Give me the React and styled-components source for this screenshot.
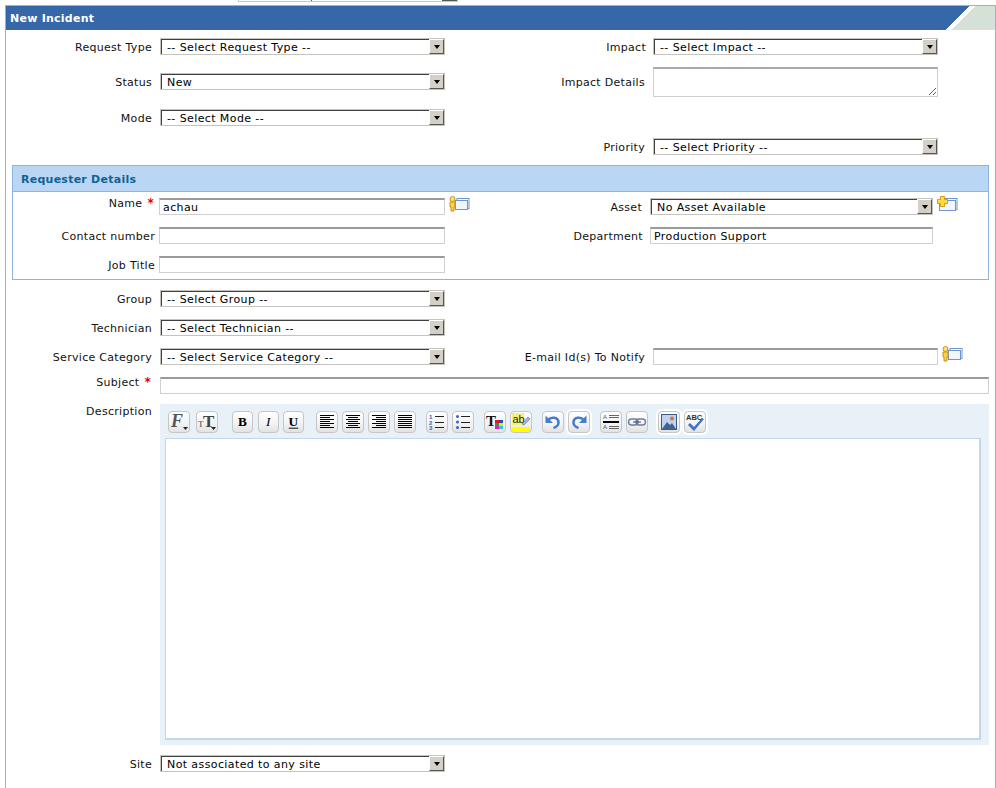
import React from 'react';
import styled, {createGlobalStyle} from 'styled-components';

const GlobalStyle = createGlobalStyle`
    html, body {
        margin: 0;
        padding: 0;
        background: #fff;
    }
    body {
        font-family: "DejaVu Sans", Verdana, sans-serif;
        font-size: 11px;
        letter-spacing: .4px;
        color: #111;
        height: 788px;
        overflow: hidden;
    }
`

const TopStrip = styled('div')`
    height: 5px;
    padding-left: 238px;
`

const TopSelect = styled('div')`
    box-sizing: border-box;
    width: 220px;
    height: 2px;
    padding-left: 72px;
    display: flex;
    justify-content: space-between;
    background: #fff;
    border: 1px solid #c8c8c4;
    border-top: none;
`

const TopTick = styled('div')`
    width: 1px;
    height: 1px;
    background: #555;
`

const TopArrow = styled('div')`
    width: 15px;
    height: 1px;
    background: #55534e;
`

const Panel = styled('div')`
    margin-left: 5px;
    width: 989px;
    height: 783px;
    border: 1px solid #8fb4e2;
    border-bottom: none;
    overflow: hidden;
`

const PanelHeader = styled('div')`
    height: 24px;
    display: flex;
    align-items: center;
    justify-content: space-between;
    background: #3567a9;
`

const PanelTitle = styled('div')`
    padding: 1px 0 0 4px;
    color: #fff;
    font-size: 11px;
    font-weight: bold;
    letter-spacing: .25px;
`

const FormRow = styled('div')`
    display: grid;
    grid-template-columns: 154px 285px 208px 285px;
    align-items: ${p => p.$align || 'center'};
    margin-top: ${p => p.$top ?? 12}px;
`

const FieldLabel = styled('div')`
    box-sizing: border-box;
    text-align: right;
    line-height: 15px;
    letter-spacing: .3px;
    padding-top: 2px;
    padding-right: ${p => p.$pad ?? 8}px;
    margin-top: ${p => p.$up ? -p.$up : 0}px;
    white-space: nowrap;
`

const Star = styled('span')`
    color: #e00000;
    font-size: 12px;
    font-weight: bold;
    margin-left: 5px;
`

const SelectBox = styled('div')`
    box-sizing: border-box;
    height: 17px;
    width: ${p => p.$w || 285}px;
    margin-top: ${p => p.$mt || 0}px;
    flex-shrink: 0;
    display: flex;
    align-items: stretch;
    background: #fff;
    border: 1px solid #c4c3be;
    box-shadow: inset 1px 1px 0 #404040;
`

const SelectText = styled('div')`
    flex: 1;
    padding: 1px 0 0 6px;
    line-height: 15px;
    color: #000;
    white-space: nowrap;
`

const SelectArrow = styled('div')`
    box-sizing: border-box;
    width: 15px;
    display: flex;
    align-items: center;
    justify-content: center;
    background: #d4d0c8;
    border: 1px solid;
    border-color: #fff #555 #555 #fff;
    &::after {
        content: '';
        border-style: solid;
        border-width: 4px 3px 0 3px;
        border-color: #000 transparent transparent transparent;
    }
`

const TextInput = styled('input')`
    box-sizing: border-box;
    display: block;
    height: 17px;
    width: ${p => p.$w || 285}px;
    flex-shrink: 0;
    margin: 0;
    padding: 0 3px;
    background: #fff;
    border: 1px solid #d0d0d0;
    border-top: 2px solid #9a9a9a;
    border-radius: 0;
    outline: none;
    font: 11px "DejaVu Sans", Verdana, sans-serif;
    letter-spacing: .4px;
    color: #000;
`

const TextArea = styled('textarea')`
    box-sizing: border-box;
    display: block;
    height: 30px;
    width: 285px;
    margin: 0;
    padding: 2px;
    background: #fff;
    border: 1px solid #d0d0d0;
    border-top: 2px solid #a8a8a8;
    border-radius: 0;
    outline: none;
`

const ControlCell = styled('div')`
    display: flex;
    align-items: flex-start;
`

const SideIcon = styled('svg')`
    flex-shrink: 0;
    margin: -2px 0 0 4px;
`

const RequesterBox = styled('div')`
    box-sizing: border-box;
    width: 977px;
    height: 115px;
    margin: 10px 0 0 6px;
    border: 1px solid #8fb4e2;
`

const BoxHeader = styled('div')`
    height: 25px;
    padding-left: 8px;
    line-height: 27px;
    background: #bad6f5;
    border-bottom: 1px solid #8fb4e2;
    color: #0f6394;
    font-size: 11px;
    font-weight: bold;
    letter-spacing: .25px;
`

const BoxRow = styled('div')`
    display: grid;
    grid-template-columns: 146px 286px 205px 283px;
    align-items: ${p => p.$align || 'center'};
    margin-top: ${p => p.$top ?? 12}px;
`

const WideRow = styled('div')`
    display: flex;
    align-items: flex-start;
    margin-top: ${p => p.$top ?? 12}px;
`

const WideLabel = styled(FieldLabel)`
    width: 154px;
    flex-shrink: 0;
`

const EditorPanel = styled('div')`
    box-sizing: border-box;
    width: 829px;
    height: 341px;
    padding: 7px 8px 5px 5px;
    display: flex;
    flex-direction: column;
    background: #e9f1f8;
`

const Toolbar = styled('div')`
    display: flex;
    gap: 4px;
    padding-left: 3px;
    height: 22px;
`

const ToolButton = styled('div')`
    box-sizing: border-box;
    width: ${p => p.$w || 22}px;
    height: 22px;
    margin-left: ${p => p.$ml || 0}px;
    display: flex;
    align-items: center;
    justify-content: center;
    border: 1px solid #c6c6c6;
    border-radius: 4px;
    background: linear-gradient(#ffffff, #f2f2f2 60%, #e2e2e2);
    box-shadow: ${p => p.$halo ? '0 0 0 2px #fff' : 'none'};
`

const EditorArea = styled('div')`
    flex: 1;
    margin-top: 5px;
    background: #fff;
    border: 1px solid #c5d5ea;
    border-width: 1px 2px 2px 1px;
`

// dessins de la barre d'outils
const Svg = ({children}) => <svg width="20" height="20" viewBox="0 0 20 20">{children}</svg>

const Lines = ({rows, color = '#000'}) => rows.map(([x1, x2, y, h], i) => (
    <rect key={i} x={x1} y={y} width={x2 - x1} height={h || 1} fill={color}/>
))

const Caret = () => <path d="M14 15h5l-2.5 3z" fill="#222"/>

const IconFont = () => (
    <Svg>
        <text x="2" y="15" fontFamily="Liberation Serif" fontStyle="italic" fontWeight="bold" fontSize="18" fill="#555">F</text>
        <Caret/>
    </Svg>
)

const IconSize = () => (
    <Svg>
        <text x="1" y="15" fontFamily="Liberation Serif" fontSize="9" fill="#444">T</text>
        <text x="6" y="15" fontFamily="Liberation Serif" fontWeight="bold" fontSize="17" fill="#444">T</text>
        <Caret/>
    </Svg>
)

const IconLetter = ({children, italic, bold, underline}) => (
    <Svg>
        <text x="10" y="14.5" textAnchor="middle" fontFamily="Liberation Serif" fontSize="14"
              fontStyle={italic ? 'italic' : 'normal'} fontWeight={bold ? 'bold' : 'normal'} fill="#000">{children}</text>
        {underline && <rect x="5" y="16" width="10" height="1" fill="#000"/>}
    </Svg>
)

const align = {
    left: [[3, 17, 3], [3, 13, 5], [3, 17, 7], [3, 13, 9], [3, 17, 11], [3, 13, 13], [3, 17, 15]],
    center: [[3, 17, 3], [5, 15, 5], [3, 17, 7], [5, 15, 9], [3, 17, 11], [5, 15, 13], [3, 17, 15]],
    right: [[3, 17, 3], [7, 17, 5], [3, 17, 7], [7, 17, 9], [3, 17, 11], [7, 17, 13], [3, 17, 15]],
    full: [[3, 17, 3], [3, 17, 5], [3, 17, 7], [3, 17, 9], [3, 17, 11], [3, 17, 13], [3, 17, 15]],
}

const IconAlign = ({mode}) => <Svg><Lines rows={align[mode]}/></Svg>

const IconOrdered = () => (
    <Svg>
        <text x="2" y="7" fontFamily="Liberation Sans" fontWeight="bold" fontSize="6" fill="#3a62b8">1</text>
        <text x="2" y="12.5" fontFamily="Liberation Sans" fontWeight="bold" fontSize="6" fill="#3a62b8">2</text>
        <text x="2" y="18" fontFamily="Liberation Sans" fontWeight="bold" fontSize="6" fill="#3a62b8">3</text>
        <Lines rows={[[8, 17, 4], [8, 17, 10], [8, 17, 15]]} color="#222"/>
    </Svg>
)

const IconBullets = () => (
    <Svg>
        <circle cx="4.5" cy="4.5" r="1.5" fill="#3a62b8"/>
        <circle cx="4.5" cy="10" r="1.5" fill="#3a62b8"/>
        <circle cx="4.5" cy="15.5" r="1.5" fill="#3a62b8"/>
        <Lines rows={[[8, 17, 4], [8, 17, 10], [8, 17, 15]]} color="#222"/>
    </Svg>
)

const IconTextColor = () => (
    <Svg>
        <text x="1" y="14" fontFamily="Liberation Serif" fontWeight="bold" fontSize="15" fill="#111">T</text>
        <rect x="10" y="8" width="4" height="3" fill="#e01818"/>
        <rect x="14" y="8" width="4" height="3" fill="#2048d8"/>
        <rect x="10" y="11" width="4" height="3" fill="#20a038"/>
        <rect x="14" y="11" width="4" height="3" fill="#e8e020"/>
        <rect x="10" y="14" width="4" height="3" fill="#e020c0"/>
        <rect x="14" y="14" width="4" height="3" fill="#20c8e0"/>
    </Svg>
)

const IconHighlight = () => (
    <Svg>
        <rect x="1" y="1" width="12" height="12" fill="#f4f07a"/>
        <text x="1.5" y="11" fontFamily="Liberation Sans" fontSize="11" letterSpacing="0" fill="#222">ab</text>
        <path d="M11 12l6-7 2 2-6 6z" fill="#aab8d8" stroke="#5a6a90" strokeWidth=".6"/>
        <rect x="1" y="15" width="18" height="4" fill="#ffff00"/>
    </Svg>
)

const IconUndo = ({flip}) => (
    <Svg>
        <g transform={flip ? 'translate(20 0) scale(-1 1)' : undefined}>
            <path d="M5 8c3-3.5 10-3 10.500 2 .3 3-2 5-5 6" fill="none" stroke="#4a7cc8" strokeWidth="2.600"/>
            <path d="M2.500 3.500v7.500h7.500z" fill="#4a7cc8"/>
        </g>
    </Svg>
)

const IconRule = () => (
    <Svg>
        <text x="2" y="7" fontFamily="Liberation Sans" fontSize="6" letterSpacing="0" fill="#555">A</text>
        <text x="2" y="17" fontFamily="Liberation Sans" fontSize="6" letterSpacing="0" fill="#555">A</text>
        <Lines rows={[[8, 18, 3], [8, 18, 5], [8, 18, 14], [8, 18, 16]]} color="#666"/>
        <rect x="2" y="9" width="16" height="2" fill="#000"/>
    </Svg>
)

const IconLink = () => (
    <Svg>
        <rect x="1.500" y="7" width="9.500" height="6" rx="3" fill="none" stroke="#6c7f9c" strokeWidth="1.400"/>
        <rect x="9" y="7" width="9.500" height="6" rx="3" fill="none" stroke="#6c7f9c" strokeWidth="1.400"/>
        <rect x="6" y="9.500" width="8" height="1" fill="#3c4c68"/>
    </Svg>
)

const IconImage = () => (
    <Svg>
        <rect x="2.500" y="2.500" width="15" height="15" fill="#bcd4f0" stroke="#3c5a90"/>
        <circle cx="13" cy="6.500" r="2" fill="#e86a30"/>
        <path d="M3 17l5-7 3 3 2-2 4 6z" fill="#44628c"/>
    </Svg>
)

const IconSpell = () => (
    <Svg>
        <text x="1" y="8" fontFamily="Liberation Sans" fontWeight="bold" fontSize="7.500" letterSpacing="0" fill="#333">ABC</text>
        <path d="M5 11l4 4 8-9 2 1-10 12-6-6z" fill="#3f72c8"/>
    </Svg>
)

// petite fenetre bleue derriere les icones de recherche
const BlueWindow = ({x, y, w, h}) => (
    <>
        <rect x={x + 2} y={y} width={w - 2} height={h - 1} fill="#fff" stroke="#6f96cc"/>
        <rect x={x + .5} y={y + 2} width={w - 2} height={h - 2} fill="#f1f6fd" stroke="#6f96cc"/>
    </>
)

const PersonIcon = () => (
    <SideIcon width="21" height="16" viewBox="0 0 21 16">
        <BlueWindow x={6} y={2.500} w={14} h={11}/>
        <circle cx="3.500" cy="3" r="2.500" fill="#fbe27a" stroke="#c8921a"/>
        <path d="M1 6h5v5h-1v4h-3v-4h-1z" fill="#f6d24a" stroke="#c8921a"/>
    </SideIcon>
)

const AddIcon = () => (
    <SideIcon width="21" height="16" viewBox="0 0 21 16">
        <BlueWindow x={2} y={2.500} w={18} h={12}/>
        <path d="M3.500 .5h4v3h3v4h-3v3h-4v-3h-3v-4h3z" fill="#ffdc40" stroke="#d89a10"/>
    </SideIcon>
)

const Select = ({value, w, mt}) => (
    <SelectBox $w={w} $mt={mt}>
        <SelectText>{value}</SelectText>
        <SelectArrow/>
    </SelectBox>
)

class NewIncident extends React.Component {
    render() {
        return (
            <Panel>
                <PanelHeader>
                    <PanelTitle>New Incident</PanelTitle>
                    <svg width="49" height="24" viewBox="0 0 49 24" shapeRendering="crispEdges">
                        <path d="M23 0H49V24H0z" fill="#fff"/>
                        <path d="M29 0H49V24H6z" fill="#d5e1d6"/>
                    </svg>
                </PanelHeader>

                <FormRow $top={8}>
                    <FieldLabel>Request Type</FieldLabel>
                    <Select value="-- Select Request Type --"/>
                    <FieldLabel $pad={7}>Impact</FieldLabel>
                    <Select value="-- Select Impact --"/>
                </FormRow>
                <FormRow $align="start">
                    <FieldLabel $up={-6}>Status</FieldLabel>
                    <Select mt={6} value="New"/>
                    <FieldLabel $up={-6}>Impact Details</FieldLabel>
                    <TextArea/>
                </FormRow>
                <FormRow>
                    <FieldLabel>Mode</FieldLabel>
                    <Select value="-- Select Mode --"/>
                </FormRow>
                <FormRow>
                    <div/>
                    <div/>
                    <FieldLabel>Priority</FieldLabel>
                    <Select value="-- Select Priority --"/>
                </FormRow>

                <RequesterBox>
                    <BoxHeader>Requester Details</BoxHeader>
                    <BoxRow $top={6} $align="start">
                        <FieldLabel $pad={5} $up={4}>Name<Star>*</Star></FieldLabel>
                        <ControlCell>
                            <TextInput $w={286} defaultValue="achau"/>
                            <PersonIcon/>
                        </ControlCell>
                        <FieldLabel>Asset</FieldLabel>
                        <ControlCell>
                            <Select w={283} value="No Asset Available"/>
                            <AddIcon/>
                        </ControlCell>
                    </BoxRow>
                    <BoxRow>
                        <FieldLabel $pad={4}>Contact number</FieldLabel>
                        <TextInput $w={286}/>
                        <FieldLabel $pad={7}>Department</FieldLabel>
                        <TextInput $w={283} defaultValue="Production Support"/>
                    </BoxRow>
                    <BoxRow>
                        <FieldLabel $pad={4}>Job Title</FieldLabel>
                        <TextInput $w={286}/>
                    </BoxRow>
                </RequesterBox>

                <FormRow $top={10}>
                    <FieldLabel>Group</FieldLabel>
                    <Select value="-- Select Group --"/>
                </FormRow>
                <FormRow>
                    <FieldLabel>Technician</FieldLabel>
                    <Select value="-- Select Technician --"/>
                </FormRow>
                <FormRow>
                    <FieldLabel>Service Category</FieldLabel>
                    <Select value="-- Select Service Category --"/>
                    <FieldLabel>E-mail Id(s) To Notify</FieldLabel>
                    <ControlCell>
                        <TextInput/>
                        <PersonIcon/>
                    </ControlCell>
                </FormRow>

                <WideRow>
                    <WideLabel $pad={9} $up={4}>Subject<Star>*</Star></WideLabel>
                    <TextInput $w={829}/>
                </WideRow>
                <WideRow $top={10}>
                    <WideLabel $up={2}>Description</WideLabel>
                    <EditorPanel>
                        <Toolbar>
                            <ToolButton><IconFont/></ToolButton>
                            <ToolButton $ml={2}><IconSize/></ToolButton>
                            <ToolButton $w={21} $ml={10}><IconLetter bold>B</IconLetter></ToolButton>
                            <ToolButton $w={21} $ml={1}><IconLetter italic>I</IconLetter></ToolButton>
                            <ToolButton $w={21}><IconLetter bold underline>U</IconLetter></ToolButton>
                            <ToolButton $ml={8}><IconAlign mode="left"/></ToolButton>
                            <ToolButton><IconAlign mode="center"/></ToolButton>
                            <ToolButton><IconAlign mode="right"/></ToolButton>
                            <ToolButton><IconAlign mode="full"/></ToolButton>
                            <ToolButton $ml={6}><IconOrdered/></ToolButton>
                            <ToolButton><IconBullets/></ToolButton>
                            <ToolButton $ml={6}><IconTextColor/></ToolButton>
                            <ToolButton><IconHighlight/></ToolButton>
                            <ToolButton $ml={6}><IconUndo/></ToolButton>
                            <ToolButton $halo><IconUndo flip/></ToolButton>
                            <ToolButton $ml={6}><IconRule/></ToolButton>
                            <ToolButton><IconLink/></ToolButton>
                            <ToolButton $ml={6} $halo><IconImage/></ToolButton>
                            <ToolButton $halo><IconSpell/></ToolButton>
                        </Toolbar>
                        <EditorArea/>
                    </EditorPanel>
                </WideRow>

                <FormRow $top={10}>
                    <FieldLabel>Site</FieldLabel>
                    <Select value="Not associated to any site"/>
                </FormRow>
            </Panel>
        );
    }
}

export default function App() {
    return (
        <>
            <GlobalStyle/>
            <TopStrip>
                <TopSelect><TopTick/><TopArrow/></TopSelect>
            </TopStrip>
            <NewIncident/>
        </>
    );
}
